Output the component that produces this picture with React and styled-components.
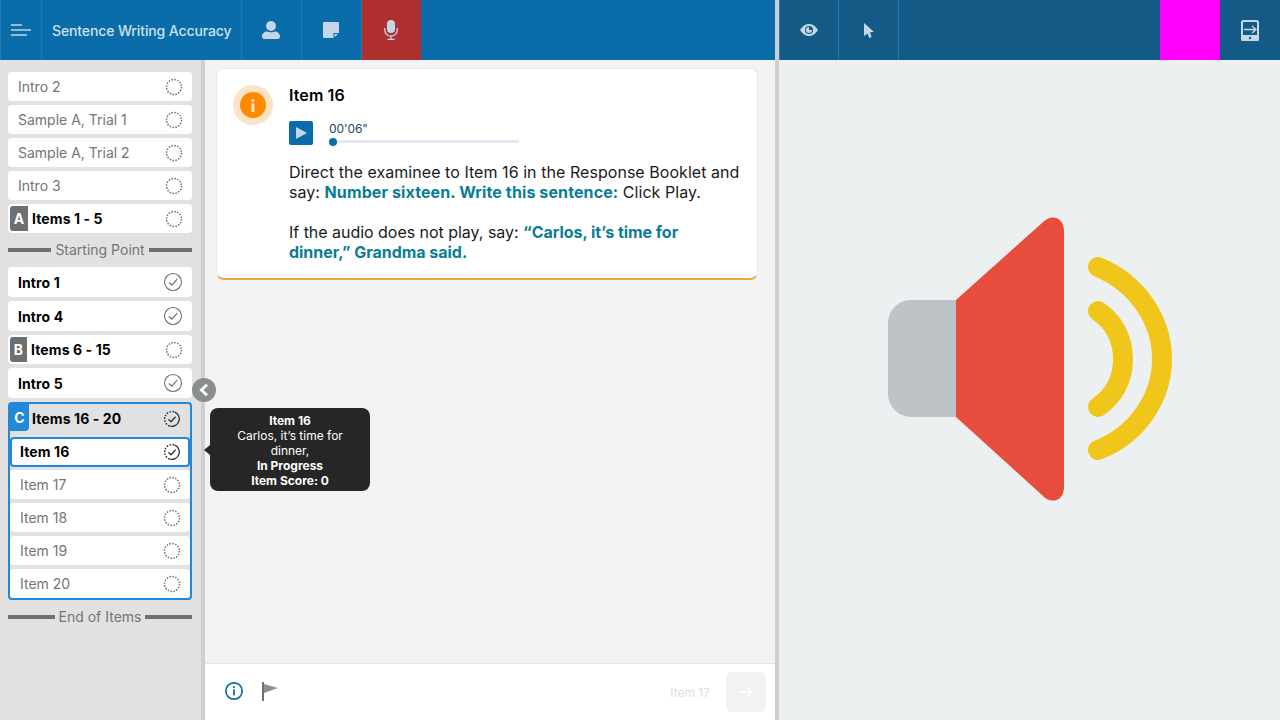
import React from 'react';
import styled, { createGlobalStyle } from 'styled-components';

const Global = createGlobalStyle`
  html, body { margin: 0; padding: 0; height: 100%; overflow: hidden; }
  body { font-family: Inter, "Liberation Sans", sans-serif; }
  * { box-sizing: border-box; }
`;

const Page = styled.div`
  width: 1280px; height: 720px; display: grid;
  grid-template-columns: 775px 4px 501px; background: #cfd0d0;
`;
const Column = styled.div`display: flex; flex-direction: column; height: 720px; min-width: 0;`;
const Divider = styled.div`background: #cfcfcf;`;
const TopBar = styled.header`
  height: 60px; flex: none; display: flex;
  background: ${p => (p.$dark ? '#135a87' : '#0a6ca8')};
`;
const Cell = styled.div`
  width: ${p => p.$w}px; height: 60px; flex: none; display: flex; align-items: center; justify-content: center;
  padding-right: ${p => p.$nudge || 0}px;
  border-right: 1px solid ${p => (p.$line ? '#1f7ab5' : 'transparent')};
  border-left: ${p => (p.$lead ? '1px solid #1f7ab5' : 'none')};
  background: ${p => p.$bg || 'transparent'};
`;
const Title = styled.div`
  width: 200px; height: 60px; flex: none; display: flex; align-items: center; padding-left: 10px;
  border-right: 1px solid #1f7ab5; color: #cfe0ec; font-size: 14px; font-weight: 500; white-space: nowrap;
  letter-spacing: -0.12px;
`;
const Spacer = styled.div`flex: 1;`;
const Body = styled.div`flex: 1; display: flex; min-height: 0; position: relative;`;
const Sidebar = styled.aside`
  width: 205px; flex: none; background: #e1e1e1; border-right: 4px solid #cfcfcf;
  padding: 12px 9px 0 8px; display: flex; flex-direction: column;
`;
const Row = styled.div`
  height: ${p => p.$h || 29}px; flex: none; margin-bottom: 4px; display: flex; align-items: center;
  background: #fff; border-radius: 4px; padding: 0 9px 0 ${p => (p.$badge ? 2 : 10)}px;
  font-size: 14px; font-weight: ${p => (p.$bold ? 700 : 400)};
  letter-spacing: ${p => (p.$bold ? '0.1px' : '0')};
  color: ${p => (p.$bold ? '#000' : '#757575')};
`;
const Label = styled.span`flex: 1; white-space: nowrap;`;
const Badge = styled.span`
  width: ${p => p.$w || 18}px; height: 25px; flex: none; margin-right: 4px;
  background: ${p => p.$c || '#6d6f70'}; color: #fff; border-radius: 3px 0 0 3px; font-weight: 700; font-size: 14px;
  display: flex; align-items: center; justify-content: center;
`;
const Separator = styled.div`
  height: 26px; margin: ${p => p.$m}; padding-bottom: 1px; flex: none; display: flex; align-items: center; gap: 4px;
  color: #757575; font-size: 14px; white-space: nowrap;
  &::before, &::after { content: ''; flex: 1; height: 4px; background: #6d6f70; }
`;
const Group = styled.div`
  height: 198px; flex: none; border: 2px solid #2288d8; border-radius: 4px;
  display: flex; flex-direction: column;
`;
const GroupHead = styled.div`
  height: 31px; flex: none; margin-bottom: 2px; display: flex; align-items: center; padding: 0 9px 2px 0;
  font-size: 14px; font-weight: 700; color: #000; letter-spacing: 0.1px;
`;
const CBadge = styled.span`
  width: 19px; height: 27px; margin-right: 3px; margin-top: -2px; background: #2288d8; color: #fff;
  border-bottom-right-radius: 4px; font-weight: 700; font-size: 14px;
  display: flex; align-items: center; justify-content: center;
`;
const SubRow = styled(Row)`
  height: ${p => p.$h || 29}px; margin-bottom: ${p => p.$mb ?? 4}px; padding-left: 10px; padding-right: 9px;
  border: ${p => (p.$active ? '2px solid #2288d8' : 'none')};
  ${p => (p.$active ? 'padding: 0 7px 1px 8px;' : '')}
`;
const Main = styled.main`flex: 1; background: #f3f3f3; display: flex; flex-direction: column; min-width: 0;`;
const Content = styled.div`flex: 1; padding: 8px 17px 0 11px;`;
const Card = styled.section`
  height: 212px; background: #fff; border: 1px solid #e6ebf3; border-bottom: 2px solid #f0a24a; border-radius: 8px;
  padding: 16px 16px 0 16px; display: flex; gap: 16px;
`;
const InfoHalo = styled.div`
  width: 40px; height: 40px; flex: none; border-radius: 50%; background: #fde3c6;
  display: flex; align-items: center; justify-content: center;
`;
const InfoDot = styled.div`
  width: 26px; height: 26px; border-radius: 50%; background: #ff8a00;
  display: flex; align-items: center; justify-content: center;
`;
const CardBody = styled.div`flex: 1; min-width: 0;`;
const CardTitle = styled.h2`
  margin: 0; font-size: 16px; line-height: 20px; font-weight: 600; color: #000; letter-spacing: 0.1px;
`;
const Player = styled.div`display: flex; gap: 16px; margin-top: 16px; height: 24px;`;
const PlayBtn = styled.div`
  width: 24px; height: 24px; background: #0a6ca8; border-radius: 2px;
  display: flex; align-items: center; justify-content: center;
`;
const Track = styled.div`width: 190px; display: flex; flex-direction: column;`;
const Time = styled.div`font-size: 12px; line-height: 16px; color: #24466a; letter-spacing: -0.1px;`;
const Bar = styled.div`height: 3px; margin-top: 3px; background: #e3e8f2; border-radius: 2px; position: relative;`;
const Knob = styled.div`
  position: absolute; left: 0; top: -2.5px; width: 8px; height: 8px; border-radius: 50%; background: #0a6ca8;
`;
const Para = styled.p`
  margin: ${p => p.$mt}px 0 0; font-size: 16px; line-height: 20px; color: #1a1a1a;
  letter-spacing: ${p => p.$ls}px;
`;
const Say = styled.strong`
  color: #0a7d96; font-weight: 700;
  ${p => (p.$ls ? `letter-spacing: ${p.$ls}px;` : '')}
`;
const Footer = styled.footer`
  height: 57px; flex: none; background: #fff; border-top: 1px solid #e4e4e4;
  display: flex; align-items: center; padding: 0 9px 0 19px;
`;
const FooterIcon = styled.div`display: flex; margin: 0 0 2px ${p => p.$ml || 0}px;`;
const Next = styled.span`font-size: 12px; color: #dedede; margin-right: 16px;`;
const NextBtn = styled.div`
  width: 40px; height: 40px; border-radius: 6px; background: #f2f2f2;
  display: flex; align-items: center; justify-content: center;
`;
const Stage = styled.div`
  flex: 1; background: #ecf0f1; display: flex; align-items: center; justify-content: center; padding: 0 0 62px 1px;
`;
const Toggle = styled.div`
  position: absolute; left: 192px; top: 318px; width: 24px; height: 24px; border-radius: 50%; background: #8a8e8f;
  display: flex; align-items: center; justify-content: center;
`;
const Tooltip = styled.div`
  position: absolute; left: 210px; top: 348px; width: 160px; height: 83px; border-radius: 8px; background: #262626;
  color: #fff; font-size: 12px; line-height: 15px; text-align: center; padding: 5px 16px;
  &::before {
    content: ''; position: absolute; left: -6px; top: 37px;
    border: 5px solid transparent; border-left: 0; border-right: 6px solid #262626;
  }
`;
const Strong = styled.div`font-weight: 700;`;

const Dotted = () => (
  <svg width="18" height="18" viewBox="0 0 18 18" fill="none">
    <circle cx="9" cy="9" r="7.5" stroke="#6d6f70" strokeWidth="1.5" strokeDasharray="1.5 1.45" />
  </svg>
);
const Done = () => (
  <svg width="20" height="20" viewBox="0 0 20 20" fill="none">
    <circle cx="10" cy="10" r="8.5" stroke="#6d6f70" strokeWidth="1.1" />
    <path d="M6 10.5l2.8 2.7L14.2 7.2" stroke="#6d6f70" strokeWidth="1.2" />
  </svg>
);
const Progress = () => (
  <svg width="18" height="18" viewBox="0 0 18 18" fill="none">
    <path d="M11.5 1.9A7.5 7.5 0 0 1 6.4 16" stroke="#333" strokeWidth="1.3" />
    <path d="M6.4 16A7.5 7.5 0 0 1 11.5 1.9" stroke="#333" strokeWidth="1.5" strokeDasharray="1.5 1.45" />
    <path d="M5.5 9.3l2.5 2.4 4.6-5" stroke="#333" strokeWidth="1.3" />
  </svg>
);

const Speaker = () => (
  <svg width="284" height="284" viewBox="0 0 284 284">
    <path d="M68 83H23A23 23 0 0 0 0 106V177A23 23 0 0 0 23 200H68Z" fill="#bdc3c7" />
    <path d="M68 83L154 6C162 -3.5 176 -1 176 14V270C176 285 162 287.5 154 278L68 200Z" fill="#e74c3c" />
    <path d="M210 50C249 66 274 103 274 142C274 181 249 218 210 233" fill="none" stroke="#f1c61a" strokeWidth="20" strokeLinecap="round" />
    <path d="M210 94C226 105 235 122 235 142C235 162 226 179 210 190" fill="none" stroke="#f1c61a" strokeWidth="20" strokeLinecap="round" />
  </svg>
);

export default function App() {
  const ic = '#c5d6e4';
  return (
    <>
      <Global />
      <Page>
        <Column>
          <TopBar>
            <Cell $w={42} $line $lead>
              <svg width="20" height="12" viewBox="0 0 20 12" fill="none" stroke={ic} strokeWidth="1.5">
                <path d="M0 1H11M0 6H20M0 11H16" />
              </svg>
            </Cell>
            <Title>Sentence Writing Accuracy</Title>
            <Cell $w={60} $line $nudge={1}>
              <svg width="18" height="18" viewBox="0 0 18 18" fill={ic}>
                <circle cx="9" cy="5" r="5" />
                <path d="M0 15.5C0 12 3 10.5 5 10.5C7 11.5 11 11.5 13 10.5C15 10.5 18 12 18 15.5C18 17 17 18 16 18H2C1 18 0 17 0 15.5Z" />
              </svg>
            </Cell>
            <Cell $w={60} $line $nudge={1}>
              <svg width="16" height="16" viewBox="0 0 16 16">
                <path d="M1 0H15A1 1 0 0 1 16 1V15A1 1 0 0 1 15 16H1A1 1 0 0 1 0 15V1A1 1 0 0 1 1 0Z" fill={ic} />
                <path d="M10.5 11H16V16H10.5Z" fill="#0a6ca8" />
                <path d="M11.5 15.2V12H15Z" fill={ic} />
              </svg>
            </Cell>
            <Cell $w={59} $bg="#b03030">
              <svg width="14" height="20" viewBox="0 0 14 20" fill="none" stroke={ic} strokeWidth="1.3">
                <rect x="3" y="0" width="8" height="13" rx="4" fill={ic} stroke="none" />
                <path d="M.8 8V10A6.2 6.2 0 0 0 13.2 10V8M7 16V19.3M3.5 19.4H10.5" />
              </svg>
            </Cell>
          </TopBar>
          <Body>
            <Sidebar>
              <Row><Label>Intro 2</Label><Dotted /></Row>
              <Row><Label>Sample A, Trial 1</Label><Dotted /></Row>
              <Row><Label>Sample A, Trial 2</Label><Dotted /></Row>
              <Row><Label>Intro 3</Label><Dotted /></Row>
              <Row $bold $badge><Badge>A</Badge><Label>Items 1 - 5</Label><Dotted /></Row>
              <Separator $m="0 0 4px">Starting Point</Separator>
              <Row $h={30} $bold><Label>Intro 1</Label><Done /></Row>
              <Row $h={30} $bold><Label>Intro 4</Label><Done /></Row>
              <Row $bold $badge><Badge $w={17}>B</Badge><Label>Items 6 - 15</Label><Dotted /></Row>
              <Row $h={30} $bold><Label>Intro 5</Label><Done /></Row>
              <Group>
                <GroupHead><CBadge>C</CBadge><Label>Items 16 - 20</Label><Progress /></GroupHead>
                <SubRow $h={30} $mb={3} $bold $active><Label>Item 16</Label><Progress /></SubRow>
                <SubRow><Label>Item 17</Label><Dotted /></SubRow>
                <SubRow><Label>Item 18</Label><Dotted /></SubRow>
                <SubRow><Label>Item 19</Label><Dotted /></SubRow>
                <SubRow $mb={0}><Label>Item 20</Label><Dotted /></SubRow>
              </Group>
              <Separator $m="4px 0 0">End of Items</Separator>
            </Sidebar>
            <Main>
              <Content>
                <Card>
                  <InfoHalo>
                    <InfoDot>
                      <svg width="4" height="13" viewBox="0 0 4 13" fill="#fde3c6">
                        <rect x=".5" y="0" width="3" height="3" rx="1.5" />
                        <rect x=".5" y="4.5" width="3" height="8.5" />
                      </svg>
                    </InfoDot>
                  </InfoHalo>
                  <CardBody>
                    <CardTitle>Item 16</CardTitle>
                    <Player>
                      <PlayBtn>
                        <svg width="11" height="12" viewBox="0 0 11 12"><path d="M0 0L11 6L0 12Z" fill="#c5d6e4" /></svg>
                      </PlayBtn>
                      <Track>
                        <Time>00'06"</Time>
                        <Bar><Knob /></Bar>
                      </Track>
                    </Player>
                    <Para $mt={17} $ls={0.05}>
                      Direct the examinee to Item 16 in the Response Booklet and say: <Say $ls={0.11}>Number sixteen. Write this sentence:</Say> Click Play.
                    </Para>
                    <Para $mt={20} $ls={-0.03}>
                      If the audio does not play, say: <Say>“Carlos, it’s time for dinner,” Grandma said.</Say>
                    </Para>
                  </CardBody>
                </Card>
              </Content>
              <Footer>
                <FooterIcon>
                  <svg width="20" height="20" viewBox="0 0 20 20" fill="none">
                    <circle cx="10" cy="10" r="8.2" stroke="#0a6ca8" strokeWidth="1.7" />
                    <rect x="9.1" y="5.2" width="1.8" height="1.9" fill="#0a6ca8" />
                    <rect x="9.1" y="8.4" width="1.8" height="6" fill="#0a6ca8" />
                  </svg>
                </FooterIcon>
                <FooterIcon $ml={18}>
                  <svg width="17" height="19" viewBox="0 0 17 19">
                    <rect x="0" y="0" width="2" height="19" fill="#6d6f70" />
                    <path d="M2 2L16 6L2 11Z" fill="#8e9091" />
                  </svg>
                </FooterIcon>
                <Spacer />
                <Next>Item 17</Next>
                <NextBtn>
                  <svg width="14" height="14" viewBox="0 0 14 14" fill="none" stroke="#fff" strokeWidth="1.4">
                    <path d="M1 7H12.5M7.5 2L12.5 7L7.5 12" />
                  </svg>
                </NextBtn>
              </Footer>
            </Main>
            <Toggle>
              <svg width="10" height="12" viewBox="0 0 10 12" fill="none" stroke="#fff" strokeWidth="2.8">
                <path d="M8 .8L2.4 6L8 11.2" />
              </svg>
            </Toggle>
            <Tooltip>
              <Strong>Item 16</Strong>
              <div>Carlos, it’s time for dinner,</div>
              <Strong>In Progress</Strong>
              <Strong>Item Score: 0</Strong>
            </Tooltip>
          </Body>
        </Column>
        <Divider />
        <Column>
          <TopBar $dark>
            <Cell $w={60} $line $lead>
              <svg width="18" height="12" viewBox="0 0 18 12">
                <path d="M0 6C3 1.5 6 0 9 0S15 1.5 18 6C15 10.5 12 12 9 12S3 10.5 0 6Z" fill={ic} />
                <circle cx="9" cy="6" r="4" fill="#135a87" />
                <path d="M9 3A3 3 0 1 0 12 6H9Z" fill={ic} />
              </svg>
            </Cell>
            <Cell $w={60} $line>
              <svg width="10" height="15" viewBox="0 0 10 15"><path d="M0 0L10 9L6 9.3L7.6 14L5.2 15L3.5 10.4L0 13Z" fill={ic} /></svg>
            </Cell>
            <Spacer />
            <Cell $w={60} $bg="#ff00ff" />
            <Cell $w={60}>
              <svg width="18" height="21" viewBox="0 0 18 21">
                <rect x="1" y="1" width="16" height="19" rx="1.5" fill="none" stroke={ic} strokeWidth="2" />
                <rect x="0" y="15" width="18" height="6" rx="1.5" fill={ic} />
                <circle cx="9" cy="18" r="1.2" fill="#135a87" />
                <path d="M3 9.5H14M11 6L15 9.5L11 13" fill="none" stroke={ic} strokeWidth="1.4" />
              </svg>
            </Cell>
          </TopBar>
          <Stage><Speaker /></Stage>
        </Column>
      </Page>
    </>
  );
}
